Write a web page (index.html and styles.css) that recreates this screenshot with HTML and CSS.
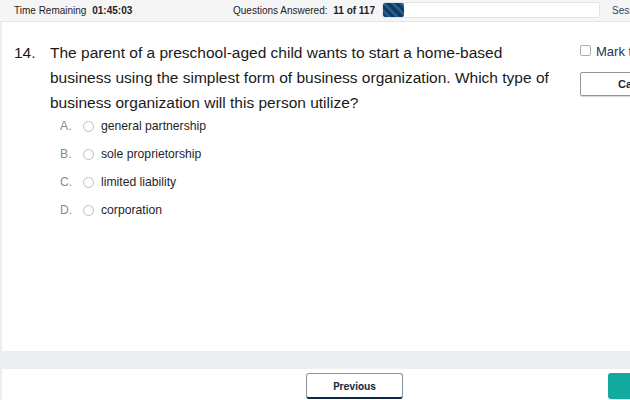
FILE: index.html
```html
<!DOCTYPE html>
<html>
<head>
<meta charset="utf-8">
<link rel="stylesheet" href="styles.css">
</head>
<body>
<div class="page">
  <header class="topbar">
    <div class="timer">Time Remaining <b>01:45:03</b></div>
    <div class="answered">Questions Answered: <b>11 of 117</b></div>
    <div class="progress"><div class="progress-fill" style="width:21px"></div></div>
    <div class="session">Session</div>
  </header>
  <main class="card">
    <div class="question">
      <div class="qnum">14.</div>
      <div class="qbody">
        <p class="qtext">The parent of a preschool-aged child wants to start a home-based business using the simplest form of business organization. Which type of business organization will this person utilize?</p>
        <ul class="options">
          <li class="option"><span class="letter">A.</span><span class="radio"></span><span class="otext">general partnership</span></li>
          <li class="option"><span class="letter">B.</span><span class="radio"></span><span class="otext">sole proprietorship</span></li>
          <li class="option"><span class="letter">C.</span><span class="radio"></span><span class="otext">limited liability</span></li>
          <li class="option"><span class="letter">D.</span><span class="radio"></span><span class="otext">corporation</span></li>
        </ul>
      </div>
      <aside class="tools">
        <label class="mark"><span class="checkbox"></span>Mark this question</label>
        <button class="calc">Calculator</button>
      </aside>
    </div>
  </main>
  <div class="band"></div>
  <footer class="footer">
    <button class="prev">Previous</button>
    <button class="next">Next</button>
  </footer>
</div>
</body>
</html>
```

FILE: styles.css
```css
html, body {
  margin: 0;
  padding: 0;
  overflow: hidden;
  background: #ffffff;
}
.page {
  width: 760px;
  height: 400px;
  font-family: "Liberation Sans", Arial, sans-serif;
  color: #1a1a1a;
  display: flex;
  flex-direction: column;
}
.topbar {
  height: 22px;
  flex: none;
  background: #f5f5f6;
  border-bottom: 1px solid #e6e6e8;
  display: flex;
  align-items: center;
  font-size: 10px;
  color: #222;
  padding-left: 14px;
  box-sizing: border-box;
}
.topbar b { font-weight: bold; margin-left: 3px; }
.timer { width: 219px; }
.answered { width: 149px; }
.progress {
  width: 218px;
  height: 16px;
  margin-top: -2px;
  background: #ffffff;
  border: 1px solid #e2e4e8;
  border-radius: 2px;
  box-sizing: border-box;
  overflow: hidden;
}
.progress-fill {
  height: 100%;
  background: repeating-linear-gradient(45deg, #0f3a63 0 3px, #2a5b88 3px 6px);
  border-radius: 2px;
}
.session { margin-left: 12px; color: #2a4766; }

.card {
  flex: none;
  height: 329px;
  box-sizing: border-box;
  border-left: 2px solid #eceef1;
  background: #fff;
  box-shadow: 0 1px 2px rgba(0,0,0,0.08);
}
.question {
  display: flex;
  padding: 18px 0 0 12px;
}
.qnum {
  width: 36px;
  font-size: 15.5px;
  line-height: 25px;
  flex: none;
}
.qbody { width: 516px; flex: none; }
.qtext {
  margin: 0;
  font-size: 15.5px;
  line-height: 25px;
  color: #1a1a1a;
}
.options {
  list-style: none;
  margin: -3px 0 0 0;
  padding: 0 0 0 10px;
}
.option {
  height: 28px;
  display: flex;
  align-items: center;
  font-size: 12.2px;
}
.letter {
  width: 23px;
  color: #8a8a8a;
}
.radio {
  width: 9px;
  height: 9px;
  border: 1px solid #b9bec4;
  border-radius: 50%;
  margin-right: 7px;
}
.otext { color: #1f1f1f; }

.tools {
  flex: none;
  padding-left: 14px;
  padding-top: 4px;
  display: flex;
  flex-direction: column;
  gap: 13px;
}
.mark {
  display: flex;
  align-items: center;
  font-size: 13px;
  color: #1c3556;
  white-space: nowrap;
}
.checkbox {
  width: 9px;
  height: 9px;
  border: 1px solid #a9afb6;
  border-radius: 2px;
  margin-right: 5px;
  margin-top: -2px;
}
.calc {
  width: 130px;
  height: 24px;
  border: 1px solid #8f98a2;
  border-radius: 2px;
  background: #fff;
  font-family: "Liberation Sans", Arial, sans-serif;
  font-weight: bold;
  font-size: 11px;
  color: #1a2a3c;
  text-align: center;
  padding: 0;
  box-shadow: 0 1px 0 #d5d9de;
}

.band {
  flex: none;
  height: 18px;
  background: #eceef0;
}
.footer {
  flex: 1;
  position: relative;
  background: #fff;
  border-left: 2px solid #eceef1;
  display: flex;
  align-items: flex-start;
  padding-top: 4px;
  box-sizing: border-box;
}
.prev {
  margin-left: 304px;
  width: 97px;
  height: 26px;
  background: #fff;
  border: 1px solid #8893a0;
  border-bottom: 2px solid #0e2744;
  border-radius: 3px;
  font-family: Inter, "Liberation Sans", sans-serif;
  font-weight: bold;
  font-size: 10px;
  color: #1b2e45;
  padding: 0;
}
.next {
  margin-left: 205px;
  width: 90px;
  height: 26px;
  background: #12a99e;
  border: none;
  border-radius: 3px;
  color: #fff;
  font-family: Inter, "Liberation Sans", sans-serif;
  font-weight: bold;
  font-size: 10px;
}
```
